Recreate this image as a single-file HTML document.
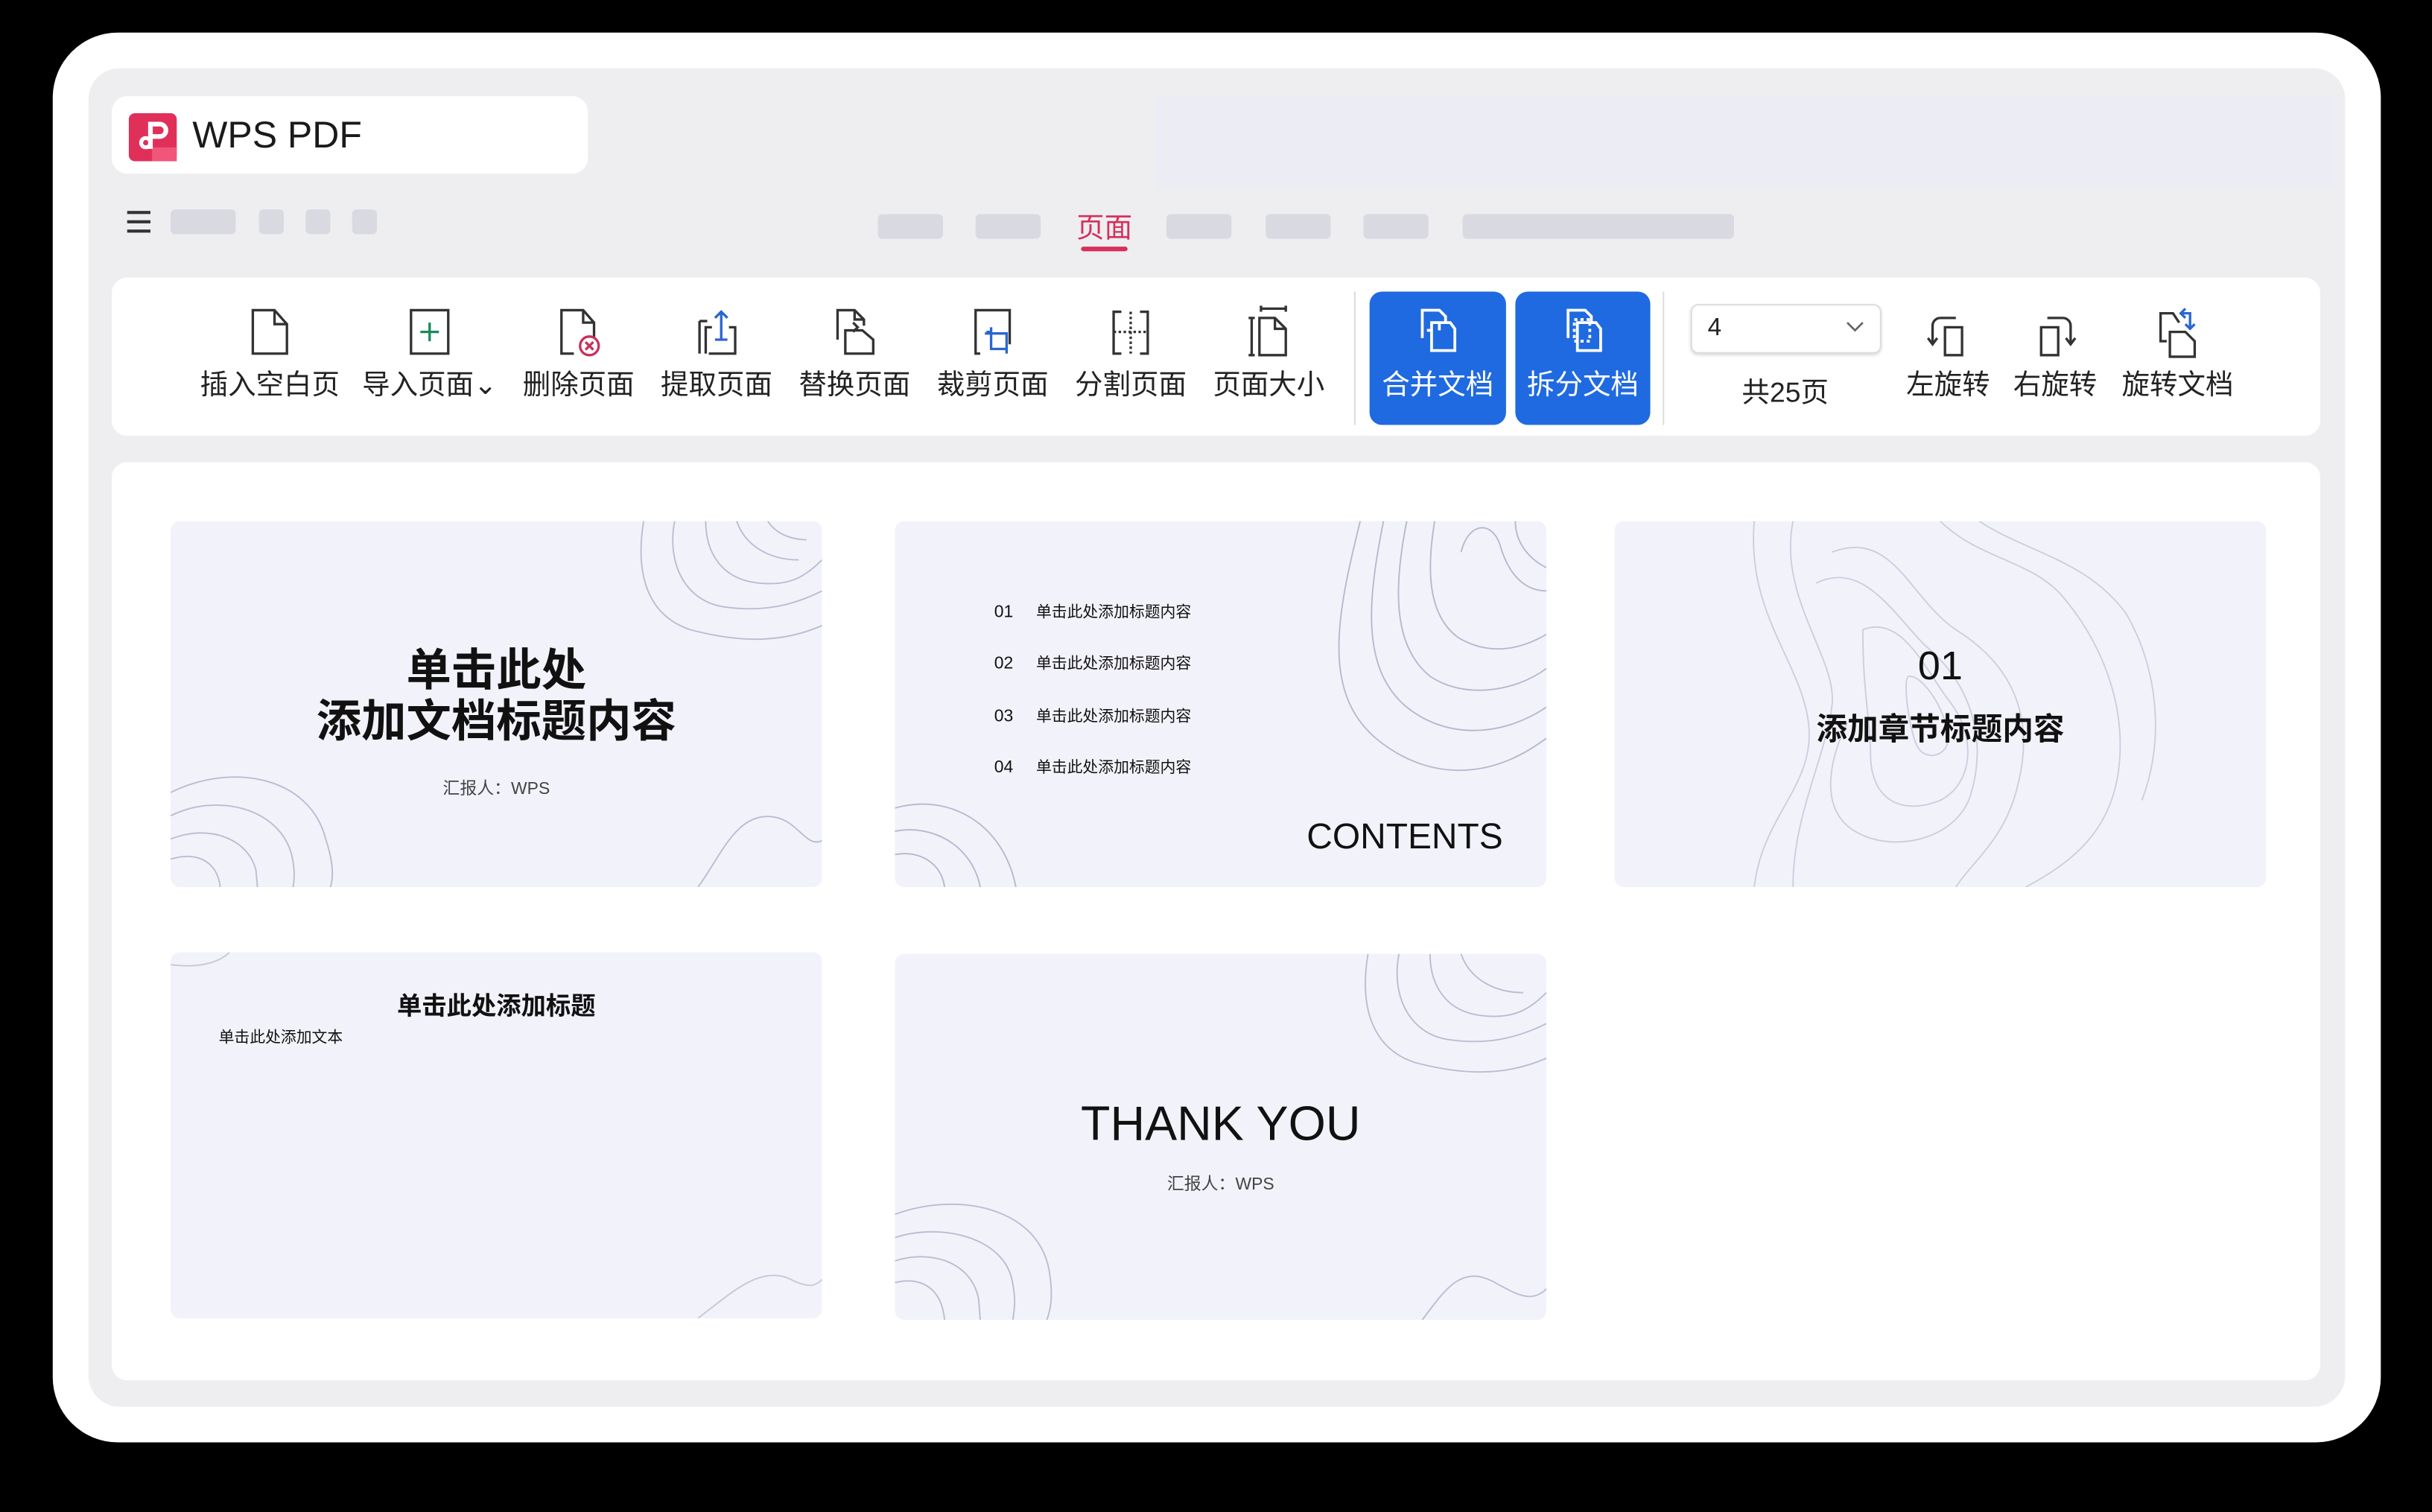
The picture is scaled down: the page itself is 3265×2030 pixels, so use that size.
<!DOCTYPE html>
<html><head><meta charset="utf-8"><style>
html,body{margin:0;padding:0;background:#000;width:3265px;height:2030px;overflow:hidden}
#w{position:absolute;left:0;top:0;width:1568px;height:975px;transform:scale(2.08227);transform-origin:0 0;font-family:"Liberation Sans","Noto Sans CJK SC",sans-serif;color:#222}
.a{position:absolute}
.ph{position:absolute;background:#d9d9e2;border-radius:3px;height:16px}
.it{position:absolute;top:197px;width:100px;text-align:center;font-size:18px;color:#222}
.it svg{display:block;margin:0 auto 6px;width:30px;height:34px}
.it span{display:block;line-height:22px}
.slide{position:absolute;background:#f2f2fa;border-radius:6px;overflow:hidden;width:420px;height:236px}
.slide svg.c{position:absolute;left:0;top:0}
.slide .t{position:absolute;left:0;right:0;text-align:center}
.btn{position:absolute;top:188px;height:86px;background:#1f6ae0;border-radius:8px;color:#fff;text-align:center;font-size:18px}
.btn svg{display:block;margin:8px auto 4px;width:30px;height:34px}
</style></head><body><div id="w">
<div class="a" style="left:34px;top:21px;width:1501px;height:909px;background:#fff;border-radius:42px"></div>
<div class="a" style="left:57px;top:44px;width:1455px;height:863px;background:#eeeef0;border-radius:20px"></div>
<div class="a" style="left:745px;top:62px;width:760px;height:60px;background:#ececf4"></div>
<div class="a" style="left:72px;top:62px;width:307px;height:50px;background:#fff;border-radius:10px"></div>
<svg class="a" style="left:83px;top:73px" width="31" height="31" viewBox="0 0 31 31"><rect width="31" height="31" rx="4" fill="#e0305a"/><rect x="15" y="22" width="16" height="9" fill="#f0557a"/><path d="M14 7h6a4 4 0 0 1 0 8h-6zM14 15v8" stroke="#fff" stroke-width="3" fill="none"/><circle cx="11" cy="19" r="3" stroke="#fff" stroke-width="2.5" fill="none"/></svg>
<div class="a" style="left:124px;top:74px;font-size:24px;color:#1a1a1a">WPS PDF</div>
<div class="a" style="left:82px;top:136px;width:15px;height:2px;background:#333;box-shadow:0 6px 0 #333,0 12px 0 #333"></div>
<div class="ph" style="left:110px;top:135px;width:42px"></div>
<div class="ph" style="left:167px;top:135px;width:16px"></div>
<div class="ph" style="left:197px;top:135px;width:16px"></div>
<div class="ph" style="left:227px;top:135px;width:16px"></div>
<div class="ph" style="left:566px;top:138px;width:42px"></div>
<div class="ph" style="left:629px;top:138px;width:42px"></div>
<div class="a" style="left:694px;top:133px;font-size:18px;color:#d6305c">页面</div>
<div class="a" style="left:697px;top:159px;width:30px;height:3px;background:#d6305c;border-radius:2px"></div>
<div class="ph" style="left:752px;top:138px;width:42px"></div>
<div class="ph" style="left:816px;top:138px;width:42px"></div>
<div class="ph" style="left:879px;top:138px;width:42px"></div>
<div class="ph" style="left:943px;top:138px;width:175px"></div>

<div class="a" style="left:72px;top:179px;width:1424px;height:102px;background:#fff;border-radius:10px"></div>
<div class="it" style="left:124px"><svg viewBox="0 0 30 34" fill="none" stroke="#333" stroke-width="1.6"><path d="M4 3h14l8 9v19H4z"/><path d="M18 3v9h8"/></svg><span>插入空白页</span></div>
<div class="it" style="left:227px"><svg viewBox="0 0 30 34" fill="none" stroke="#333" stroke-width="1.6"><path d="M3 3h24v28H3z"/><path d="M15 11v12M9 17h12" stroke="#1a8a5a"/></svg><span>导入页面⌄</span></div>
<div class="it" style="left:323px"><svg viewBox="0 0 30 34" fill="none" stroke="#333" stroke-width="1.6"><path d="M12 31H4V3h14l7 8v10"/><path d="M18 3v8h7"/><circle cx="22" cy="26" r="6" stroke="#c9305a"/><path d="M19.5 23.5l5 5M24.5 23.5l-5 5" stroke="#c9305a"/></svg><span>删除页面</span></div>
<div class="it" style="left:412px"><svg viewBox="0 0 30 34" fill="none" stroke="#333" stroke-width="1.6"><path d="M4 31V10M4 10h5M8 31V14h4M10 31h17V14h-4"/><path d="M18 22V4M14 8l4-4 4 4M14 22h8" stroke="#2a66d0"/></svg><span>提取页面</span></div>
<div class="it" style="left:501px"><svg viewBox="0 0 30 34" fill="none" stroke="#333" stroke-width="1.6"><path d="M4 22V3h11l6 6v4M15 3v6h6"/><path d="M9 31V16h11l7 6v9z"/><path d="M14 11l3 3-3 3"/></svg><span>替换页面</span></div>
<div class="it" style="left:590px"><svg viewBox="0 0 30 34" fill="none" stroke="#333" stroke-width="1.6"><path d="M7 31H4V3h22v22"/><path d="M10 18h14v10" stroke="#2a66d0"/><path d="M11 17h3v11h10M14 14v3M24 28v3" stroke="#2a66d0"/></svg><span>裁剪页面</span></div>
<div class="it" style="left:679px"><svg viewBox="0 0 30 34" fill="none" stroke="#333" stroke-width="1.6"><path d="M9 4H4v27h5M21 4h5v27h-5"/><path d="M15 4v27M4 17h22" stroke-dasharray="1.6 1.6"/></svg><span>分割页面</span></div>
<div class="it" style="left:768px"><svg viewBox="0 0 30 34" fill="none" stroke="#333" stroke-width="1.6"><path d="M10 2h16M10 0v4M26 0v4M4 8v24M2 8h4M2 32h4"/><path d="M9 8h10l7 7v17H9z"/><path d="M19 8v7h7"/></svg><span>页面大小</span></div>
<div class="a" style="left:873px;top:188px;width:1px;height:86px;background:#ddd"></div>
<div class="btn" style="left:883px;width:88px"><svg viewBox="0 0 30 34" fill="none" stroke="#fff" stroke-width="1.8"><path d="M5 22V4h11l4 4v4"/><path d="M11 30V12h12l3 4v14z"/><path d="M11 17h-3M16 12v5"/></svg>合并文档</div>
<div class="btn" style="left:977px;width:87px"><svg viewBox="0 0 30 34" fill="none" stroke="#fff" stroke-width="1.8"><path d="M5 22V4h11l4 4v4"/><path d="M11 30V12h12l3 4v14z"/><path d="M9 10h10v14H9z" stroke-dasharray="2 2"/></svg>拆分文档</div>
<div class="a" style="left:1072px;top:188px;width:1px;height:86px;background:#ddd"></div>
<div class="a" style="left:1090px;top:196px;width:123px;height:32px;background:#fff;border:1px solid #ddd;border-radius:5px;box-shadow:0 1px 2px rgba(0,0,0,.15);box-sizing:border-box"></div>
<div class="a" style="left:1101px;top:203px;font-size:16px">4</div>
<svg class="a" style="left:1190px;top:207px" width="12" height="8"><path d="M1 1l5 5 5-5" stroke="#666" stroke-width="1.3" fill="none"/></svg>
<div class="a" style="left:1111px;top:239px;width:80px;text-align:center;font-size:18px">共25页</div>
<div class="it" style="left:1206px"><svg viewBox="0 0 30 34" fill="none" stroke="#333" stroke-width="1.6"><path d="M13 14h11v18H13z"/><path d="M20 8H10a5 5 0 0 0-5 5v11M2 21l3 4 3-4"/></svg><span>左旋转</span></div>
<div class="it" style="left:1275px"><svg viewBox="0 0 30 34" fill="none" stroke="#333" stroke-width="1.6"><path d="M6 14h11v18H6z"/><path d="M10 8h10a5 5 0 0 1 5 5v11M22 21l3 4 3-4"/></svg><span>右旋转</span></div>
<div class="it" style="left:1354px"><svg viewBox="0 0 30 34" fill="none" stroke="#333" stroke-width="1.6"><path d="M8 23H4V5h8l4 6"/><path d="M10 33V17h10l6 6v10z"/><path d="M20 2l-3 3 3 3M17 5h6v10M20 12l3 3 3-3" stroke="#2a66d0"/></svg><span>旋转文档</span></div>

<div class="a" style="left:72px;top:298px;width:1424px;height:592px;background:#fff;border-radius:10px"></div>

<div class="slide" style="left:110px;top:336px">
<svg class="c" width="420" height="236" fill="none" stroke="#babcd3" stroke-width="0.9"><path d="M305 0c-5 30 0 60 30 70 30 8 60 10 90-5"/><path d="M325 0c-5 25 5 50 30 55 25 4 45 0 65-10"/><path d="M345 0c0 20 10 38 35 40 20 2 30-5 40-15"/><path d="M365 0c5 15 20 25 40 25"/><path d="M385 0c5 8 15 12 25 12"/><path d="M0 175c40-20 90-10 100 30 5 15 5 25 3 31"/><path d="M0 190c30-15 70-5 78 25 2 8 2 15 1 21"/><path d="M0 205c25-10 50 0 55 20l1 11"/><path d="M0 218c15-5 30 0 32 18"/><path d="M340 236c15-20 25-50 50-45 15 3 20 20 30 15"/></svg>
<div class="t" style="top:81px;font-size:29px;font-weight:bold;line-height:33px;color:#111">单击此处<br>添加文档标题内容</div>
<div class="t" style="top:164px;font-size:11px;color:#444">汇报人：WPS</div></div>

<div class="slide" style="left:577px;top:336px">
<svg class="c" width="420" height="236" fill="none" stroke="#b6b8d0" stroke-width="0.9"><path d="M300 0c-15 60-25 110 10 140 30 25 70 30 110 0"/><path d="M315 0c-10 50-15 95 15 120 25 20 60 20 90 0"/><path d="M330 0c-8 40-10 80 15 100 22 15 55 10 75-5"/><path d="M348 0c-5 30-5 60 15 75 20 12 40 8 57-2"/><path d="M365 20c5-20 20-20 25-5 5 18 15 30 30 30"/><path d="M400 0c0 15 10 25 20 30"/><path d="M0 185c35-10 70 10 78 51"/><path d="M0 200c25-5 50 10 55 36"/><path d="M0 215c15-3 30 5 32 21"/></svg>
<div class="a" style="left:64px;top:43px;font-size:11px;line-height:33.3px;color:#111">01<br>02<br>03<br>04</div>
<div class="a" style="left:91px;top:43px;font-size:10px;line-height:33.3px;color:#111">单击此处添加标题内容<br>单击此处添加标题内容<br>单击此处添加标题内容<br>单击此处添加标题内容</div>
<div class="a" style="right:28px;top:190px;font-size:23px;color:#111">CONTENTS</div></div>

<div class="slide" style="left:1041px;top:336px">
<svg class="c" width="420" height="236" fill="none" stroke="#ccceDF" stroke-width="0.9"><path d="M90 0c-5 60 30 90 35 130 5 40-30 60-35 106"/><path d="M115 0c-10 50 30 90 25 120-5 35-25 70-25 116"/><path d="M140 20c40-15 50 30 80 50 40 25 50 60 40 100-8 35-30 50-40 66"/><path d="M130 40c30-15 50 20 70 40 30 25 40 60 30 95-8 30-50 40-75 25-25-15-15-50-5-70"/><path d="M160 70c25-10 40 25 55 45 20 25 15 55-5 65-25 10-45 0-45-30 0-20-5-40-5-80z"/><path d="M190 100c10 0 25 25 25 40 0 12-15 15-20 5-5-10-10-45-5-45z"/><path d="M210 0c25 25 60 25 80 50 25 30 40 70 35 110-5 40-30 60-60 76"/><path d="M235 0c30 20 70 25 95 60 20 35 25 80 10 120"/></svg>
<div class="t" style="top:78px;font-size:26px;color:#111">01</div>
<div class="t" style="top:118px;font-size:20px;font-weight:bold;color:#111">添加章节标题内容</div></div>

<div class="slide" style="left:110px;top:614px">
<svg class="c" width="420" height="236" fill="none" stroke="#c6c8da" stroke-width="0.9"><path d="M0 8c15 2 30 0 38-8"/><path d="M340 236c20-15 40-35 60-25 10 5 15 5 20 0"/></svg>
<div class="t" style="top:21px;font-size:16px;font-weight:bold;color:#111">单击此处添加标题</div>
<div class="a" style="left:31px;top:46px;font-size:10px;color:#111">单击此处添加文本</div></div>

<div class="slide" style="left:577px;top:615px">
<svg class="c" width="420" height="236" fill="none" stroke="#babcd3" stroke-width="0.9"><path d="M305 0c-5 30 0 60 30 70 30 8 60 10 90-5"/><path d="M325 0c-5 25 5 50 30 55 25 4 45 0 65-10"/><path d="M345 0c0 20 10 38 35 40 20 2 30-5 40-15"/><path d="M365 0c5 15 20 25 40 25"/><path d="M0 168c40-15 95-5 100 40 2 15 0 22-2 28"/><path d="M0 183c30-10 72 0 76 30 2 10 1 17 0 23"/><path d="M0 198c25-8 50 2 54 25l1 13"/><path d="M0 212c15-4 30 2 32 24"/><path d="M340 236c15-20 25-35 45-25 15 8 25 15 35 5"/></svg>
<div class="t" style="top:92px;font-size:31px;color:#111">THANK YOU</div>
<div class="t" style="top:140px;font-size:11px;color:#444">汇报人：WPS</div></div>
</div></body></html>
